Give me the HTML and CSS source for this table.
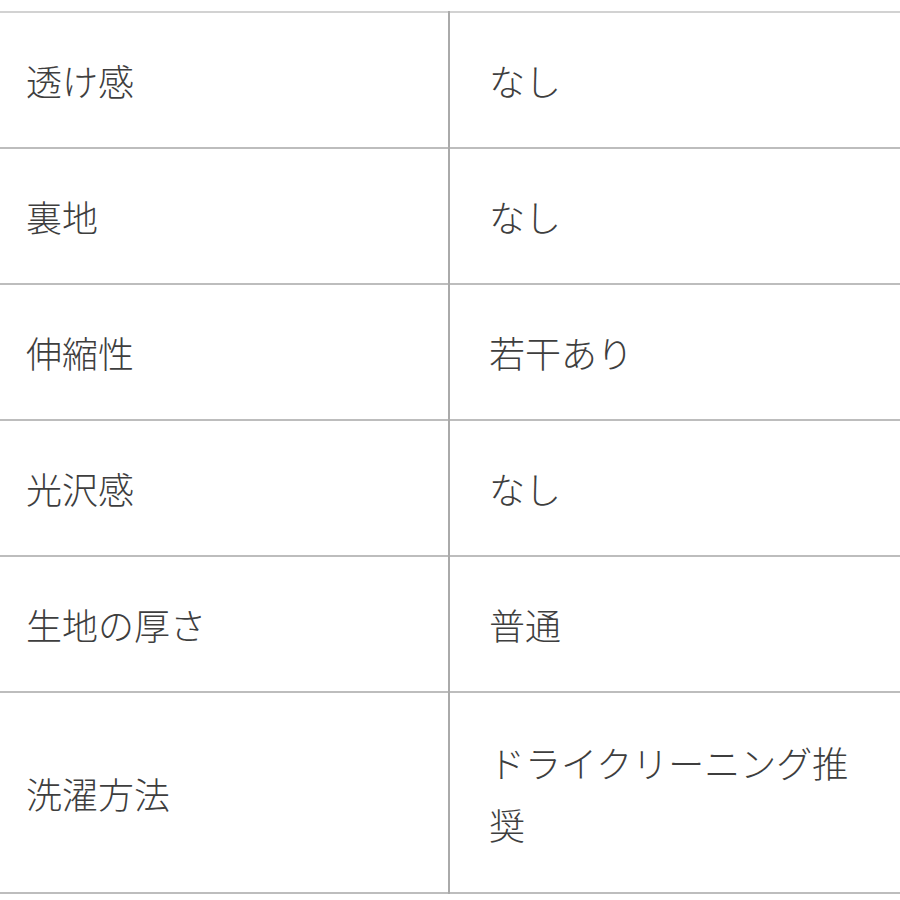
FILE: index.html
```html
<!DOCTYPE html>
<html lang="ja">
<head>
<meta charset="utf-8">
<title>素材情報</title>
<link rel="stylesheet" href="styles.css">
</head>
<body>
<div class="page">
  <table class="spec">
    <tbody>
      <tr><th>透け感</th><td>なし</td></tr>
      <tr><th>裏地</th><td>なし</td></tr>
      <tr><th>伸縮性</th><td>若干あり</td></tr>
      <tr><th>光沢感</th><td>なし</td></tr>
      <tr><th>生地の厚さ</th><td>普通</td></tr>
      <tr class="tall"><th>洗濯方法</th><td>ドライクリーニング推奨</td></tr>
    </tbody>
  </table>
</div>
</body>
</html>
```

FILE: styles.css
```css
html, body {
  margin: 0;
  padding: 0;
  background: #ffffff;
}

.page {
  padding-top: 11px;
}

.spec {
  width: 900px;
  border-collapse: collapse;
  table-layout: fixed;
  border-top: 2px solid #d2d2d2;
  font-family: "Noto Sans CJK JP", "Noto Sans", sans-serif;
  font-weight: 300;
  font-size: 36px;
  line-height: 62px;
  color: #3e3e3e;
}

.spec tr {
  border-bottom: 2px solid #bdbdbd;
}

.spec th,
.spec td {
  text-align: left;
  font-weight: 300;
  vertical-align: middle;
  height: 134px;
  box-sizing: border-box;
  padding: 36px 0;
}

.spec th {
  width: 449px;
  padding-left: 26px;
  border-right: 2px solid #aaaaaa;
}

.spec td {
  padding-left: 39px;
  padding-right: 40px;
}

.spec .tall th,
.spec .tall td {
  height: 201px;
}
```
